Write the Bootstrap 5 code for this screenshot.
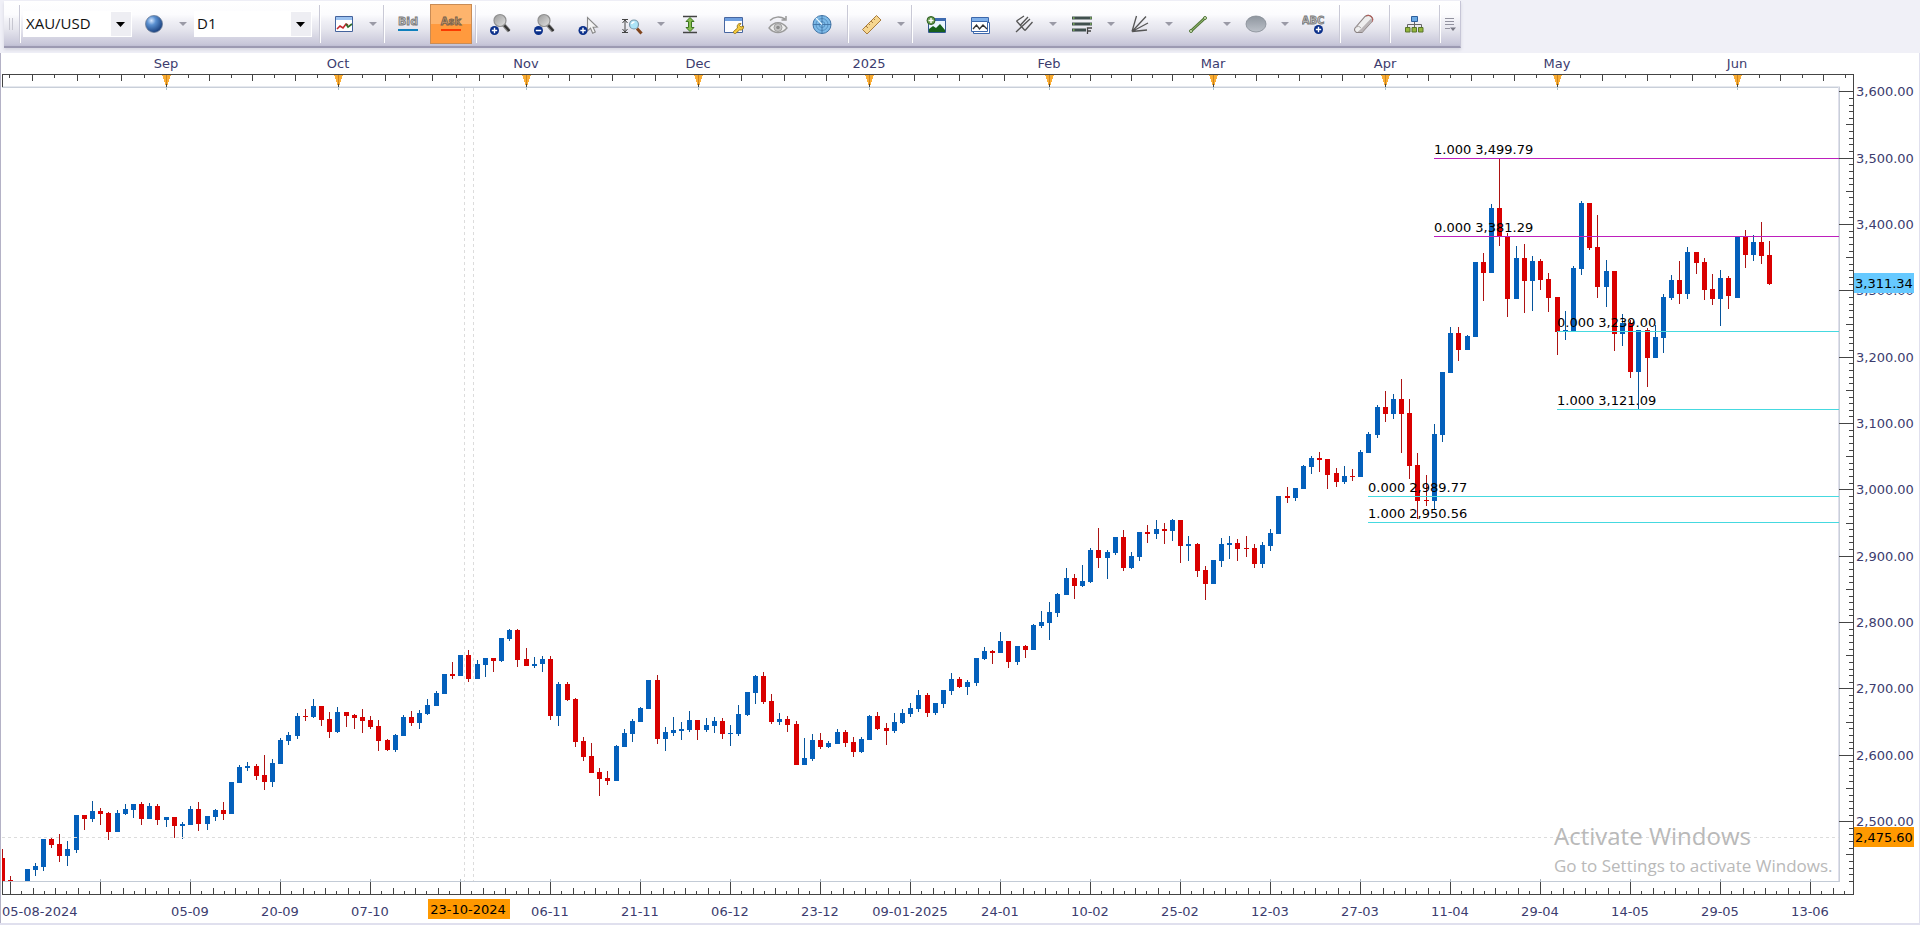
<!DOCTYPE html>
<html lang="en">
<head>
<meta charset="utf-8">
<meta name="viewport" content="width=device-width, initial-scale=1">
<title>XAU/USD D1</title>
<link href="https://cdn.jsdelivr.net/npm/bootstrap@5.3.0/dist/css/bootstrap.min.css" rel="stylesheet">
<style>
  body { background: #f0f0f7; font-family: "Open Sans", "Noto Sans", sans-serif; }
  .tools {
    height: 47px; margin: 1px 0 5px 4px; padding-right: 2px;
    background: linear-gradient(#fff 0, #fcfcfe 30%, #efeff5 46%, #e6e6ee 62%, #c9c8da 95%, #bfbed2 100%);
    border-bottom: 2px solid #9c9ab2; border-right: 1px solid #c6c5d6;
    box-shadow: 0 2px 3px #d5d5e0;
  }
  .grip { width: 15px; height: 12px; background: repeating-linear-gradient(90deg, #c6c6d0 0 1px, transparent 1px 3px) 5px 0 / 6px 12px no-repeat; }
  .rule { width: 6px; height: 38px; background: linear-gradient(90deg, transparent 3px, #c9c9d6 3px 4px, #fff 4px 5px, transparent 5px); }
  .rule-start { width: 4px; background: linear-gradient(90deg, #c9c9d6 1px, #fff 1px 2px, transparent 2px); }
  .tool { width: 44px; height: 40px; }
  .tool svg { width: 24px; height: 24px; display: block; }
  .drop { width: 14px; height: 40px; }
  .drop::after { content: ""; border: 4px solid transparent; border-top-color: #9a9aa6; border-bottom: 0; }
  .tool-on { width: 42px; background: linear-gradient(#fdb46d 0 50%, #ff9a3e 50% 100%); border: 1px solid #c98c55; }
  .pick {
    width: 109px; height: 26px; padding: 0 0 2px 2px; font-size: 15px; line-height: 22px; color: #111;
    background: url("data:image/svg+xml,%3Csvg xmlns='http://www.w3.org/2000/svg' width='20' height='26'%3E%3Crect width='20' height='26' fill='%23eeeef3'/%3E%3Cpath d='M5 11h9l-4.500 5z'/%3E%3C/svg%3E") right 0 center / 20px 26px no-repeat #fff;
    border: 1px solid #fff; appearance: none;
  }
  .pick-wide { width: 118px; }
  .chart { min-height: 400px; background: #fff; border-bottom: 2px solid #e0e0ee; box-shadow: inset 1px 0 #b4b2c6, inset -1px 0 #e0e0ee; }
  .chart > svg { position: absolute; width: 100%; height: 100%; font-family: "DejaVu Sans", Verdana, sans-serif; font-size: 13px; }
  .crisp { shape-rendering: crispEdges; }
  .axis-text { fill: #3c3c6e; }
  .watermark { width: 284px; right: 82px; bottom: 43px; color: #b9b9b9; pointer-events: none; }
  .watermark-big { font-size: 24px; line-height: 32px; }
  .watermark-small { font-size: 17px; line-height: 28px; }
</style>
</head>
<body class="d-flex flex-column vh-100 overflow-hidden">

<svg class="position-absolute" width="0" height="0" aria-hidden="true">
  <defs>
    <radialGradient id="ball" cx=".35" cy=".3" r=".75"><stop offset="0" stop-color="#d4e6ff"/><stop offset=".35" stop-color="#5a90d0"/><stop offset="1" stop-color="#153a78"/></radialGradient>
    <linearGradient id="lens" x2="1" y2="1"><stop offset="0" stop-color="#9a9a9a"/><stop offset="1" stop-color="#e2e2e2"/></linearGradient>
    <linearGradient id="oval" x2="0" y2="1"><stop offset="0" stop-color="#8f969f"/><stop offset="1" stop-color="#bcc1c9"/></linearGradient>
  </defs>
</svg>

<header class="d-flex flex-shrink-0">
  <div class="tools d-flex align-items-center" role="toolbar" aria-label="Chart tools">
    <span class="grip"></span>
    <span class="rule rule-start"></span>
    <div class="d-flex align-items-center">
      <select class="pick rounded-0" aria-label="Symbol"><option>XAU/USD</option></select>
      <button class="tool btn border-0 p-0 d-flex align-items-center justify-content-center" aria-label="Link colour"><svg viewBox="0 0 24 24"><circle cx="12" cy="12" r="8.500" fill="url(#ball)" stroke="#6d7f99" stroke-width=".8"/></svg></button>
      <button class="drop btn border-0 p-0 d-flex align-items-center justify-content-center me-1" aria-label="Link colours"></button>
      <select class="pick pick-wide rounded-0" aria-label="Period"><option>D1</option></select>
      <span class="rule ms-1"></span>
      <button class="tool btn border-0 p-0 d-flex align-items-center justify-content-center" aria-label="Chart type"><svg viewBox="0 0 24 24"><path d="M3.500 4.500h17v15h-17z" fill="#fff" stroke="#44639c"/><path d="M4 5h16v3H4z" fill="#9cc2f0"/><path d="M5 17l3-3 3 2 3-4 2 1" fill="none" stroke="#c1272d" stroke-width="1.600"/><path d="M14 12l2 3 4-3" fill="none" stroke="#2e6b2a" stroke-width="1.600"/></svg></button>
      <button class="drop btn border-0 p-0 d-flex align-items-center justify-content-center" aria-label="Chart types"></button>
      <span class="rule"></span>
      <button class="tool btn border-0 p-0 d-flex align-items-center justify-content-center" aria-label="Bid prices"><svg viewBox="0 0 24 24"><text x="12" y="13" text-anchor="middle" font-family="DejaVu Sans" font-weight="bold" font-size="11" fill="#c4c4c4" stroke="#777" stroke-width=".8">Bid</text><path d="M2 17h20v2H2z" fill="#0f80bd"/></svg></button>
      <button class="tool tool-on btn rounded-0 p-0 d-flex align-items-center justify-content-center" aria-label="Ask prices" aria-pressed="true"><svg viewBox="0 0 24 24"><text x="12" y="13" text-anchor="middle" font-family="DejaVu Sans" font-weight="bold" font-size="10" fill="#cf9a69" stroke="#75604a" stroke-width=".8">Ask</text><path d="M2 17h20v2H2z" fill="#fb3a00"/></svg></button>
      <span class="rule"></span>
      <button class="tool btn border-0 p-0 d-flex align-items-center justify-content-center" aria-label="Zoom in"><svg viewBox="0 0 24 24"><path d="M15 12l6 7" stroke="#888" stroke-width="4"/><path d="M15.500 12.500l6 6.500" stroke="#333" stroke-width="2"/><circle cx="12" cy="8.500" r="6" fill="url(#lens)" stroke="#909090" stroke-width="1.200"/><circle cx="6.500" cy="18.500" r="4.500" fill="#0a2f8a"/><path d="M3.800 18.500h5.400M6.500 15.800v5.400" stroke="#fff" stroke-width="1.400"/></svg></button>
      <button class="tool btn border-0 p-0 d-flex align-items-center justify-content-center" aria-label="Zoom out"><svg viewBox="0 0 24 24"><path d="M15 12l6 7" stroke="#888" stroke-width="4"/><path d="M15.500 12.500l6 6.500" stroke="#333" stroke-width="2"/><circle cx="12" cy="8.500" r="6" fill="url(#lens)" stroke="#909090" stroke-width="1.200"/><circle cx="6.500" cy="18.500" r="4.500" fill="#0a2f8a"/><path d="M3.800 18.500h5.400" stroke="#fff" stroke-width="1.500"/></svg></button>
      <button class="tool btn border-0 p-0 d-flex align-items-center justify-content-center" aria-label="Add point"><svg viewBox="0 0 24 24"><path d="M11.500 5.500v13.500l3-2.800 2.200 5 2.600-1.200-2.200-4.800 4.200-.2z" fill="#f4f4f4" stroke="#888" stroke-width="1.100"/><circle cx="7" cy="18.500" r="4.500" fill="#0a2f8a"/><path d="M4.300 18.500h5.400M7 15.800v5.400" stroke="#fff" stroke-width="1.400"/></svg></button>
      <button class="tool btn border-0 p-0 d-flex align-items-center justify-content-center" aria-label="Scale zoom"><svg viewBox="0 0 24 24"><path d="M5 7v13M2 7.500h6M2 20.500h6M2.500 11L5 8l2.500 3M2.500 17L5 20l2.500-3" fill="none" stroke="#444"/><path d="M17 16.500l4.500 5" stroke="#80441c" stroke-width="3"/><circle cx="14" cy="12.500" r="4.500" fill="#ade4f7" stroke="#7a97a8" stroke-width="1.200"/><path d="M11.500 12q1-2 3-2" fill="none" stroke="#fff" stroke-width="1.400"/></svg></button>
      <button class="drop btn border-0 p-0 d-flex align-items-center justify-content-center" aria-label="Scale zoom options"></button>
      <button class="tool btn border-0 p-0 d-flex align-items-center justify-content-center" aria-label="Fit vertically"><svg viewBox="0 0 24 24"><path d="M5 4.500h14M5 20.500h14" stroke="#444" stroke-width="1.400"/><path d="M12 5.500l4 4h-2.500v6H16l-4 4-4-4h2.500v-6H8z" fill="#87bd4e" stroke="#3d7520"/></svg></button>
      <button class="tool btn border-0 p-0 d-flex align-items-center justify-content-center" aria-label="Chart settings"><svg viewBox="0 0 24 24"><path d="M2.500 5.500h18v15h-18z" fill="#fdfdff" stroke="#4766a0"/><path d="M3 6h17v3H3z" fill="#6f9fe0"/><path d="M11.500 19.500l4-3.500c-1-3 1-5 3.500-4.500l-1.500 2 1.500 1.500 2.500-1c.5 3-1.500 4.500-4 4l-4 3.500c-1.500.5-2.500-1-2-2z" fill="#f4c93c" stroke="#94741c" stroke-width=".9"/></svg></button>
      <button class="tool btn border-0 p-0 d-flex align-items-center justify-content-center" aria-label="Show objects"><svg viewBox="0 0 24 24"><path d="M4 8.500c4-4 10-4.500 15-1.500M20 4v4h-4.500" fill="none" stroke="#999" stroke-width="1.500"/><path d="M3 16c5-7 13-7 18 0-5 6-13 6-18 0z" fill="#eee" stroke="#9a9a9a" stroke-width="1.300"/><circle cx="12" cy="15.500" r="4" fill="#c4c4c4" stroke="#a0a0a0"/><circle cx="12" cy="15.500" r="1.800" fill="#8c8c8c"/></svg></button>
      <button class="tool btn border-0 p-0 d-flex align-items-center justify-content-center" aria-label="Scanner"><svg viewBox="0 0 24 24"><circle cx="12" cy="12.500" r="9" fill="#7dbae8" stroke="#3f73a5"/><circle cx="12" cy="12.500" r="6" fill="none" stroke="#4c86b8" stroke-width=".8"/><circle cx="12" cy="12.500" r="3" fill="none" stroke="#4c86b8" stroke-width=".8"/><path d="M12 3.500v18M3 12.500h18" stroke="#3f73a5" stroke-width=".9"/><path d="M12 12.500L6 6" stroke="#e5f6ff" stroke-width="1.200"/></svg></button>
      <span class="rule"></span>
      <button class="tool btn border-0 p-0 d-flex align-items-center justify-content-center" aria-label="Measure"><svg viewBox="0 0 24 24"><path d="M2.500 17.500l14-14 4.500 4.500-14 14z" fill="#f6d68f" stroke="#a87c3e"/><path d="M6 14l2 2M8.500 11.500l1.500 1.500M11 9l2 2M13.500 6.500L15 8" stroke="#a87c3e"/></svg></button>
      <button class="drop btn border-0 p-0 d-flex align-items-center justify-content-center" aria-label="Measure tools"></button>
      <span class="rule"></span>
      <button class="tool btn border-0 p-0 d-flex align-items-center justify-content-center" aria-label="Add picture"><svg viewBox="0 0 24 24"><path d="M4.500 6.500h17v14h-17z" fill="#e9f5ff" stroke="#32588f"/><path d="M4 6h18v3H4z" fill="#3e6bb0"/><path d="M5 20v-3l4-3 3 2 4-4 5 6v2z" fill="#17601b"/><circle cx="7" cy="8.500" r="4" fill="#679b4c" stroke="#2f5e25"/><path d="M4.500 8.500h5M7 6v5" stroke="#fff" stroke-width="1.400"/></svg></button>
      <button class="tool btn border-0 p-0 d-flex align-items-center justify-content-center" aria-label="Chart windows"><svg viewBox="0 0 24 24"><path d="M3.500 5.500h17v12h-17z" fill="#fff" stroke="#3c68ac"/><path d="M4 6h16v3H4z" fill="#7fb0ea"/><path d="M5.500 10.500h16v11h-16z" fill="#fff" stroke="#3c68ac"/><path d="M3.500 9.500h16v10h-16z" fill="#fff" stroke="#3c68ac"/><path d="M5 17l3.500-4 3 4 3.500-4 4 4" fill="none" stroke="#333" stroke-width="1.300"/></svg></button>
      <button class="tool btn border-0 p-0 d-flex align-items-center justify-content-center" aria-label="Pitchfork"><svg viewBox="0 0 24 24"><path d="M4 20L18 7M4.500 9l8.500 9.500M4.500 9L12 4M8.500 13l7.500-8M13 18.500L20.500 10" fill="none" stroke="#555" stroke-width="1.300"/></svg></button>
      <button class="drop btn border-0 p-0 d-flex align-items-center justify-content-center" aria-label="Pitchfork tools"></button>
      <button class="tool btn border-0 p-0 d-flex align-items-center justify-content-center" aria-label="Fibonacci levels"><svg viewBox="0 0 24 24"><path d="M2 6h20M2 12h20M2 18h14" stroke="#40504e" stroke-width="3"/><path d="M3 6h1.500M20 6h1.500M3 12h1.500M20 12h1.500M3 18h1.500" stroke="#84b85c" stroke-width="1.500"/><path d="M17.500 22v-6H22M17.500 19H21" fill="none" stroke="#444" stroke-width="1.300"/></svg></button>
      <button class="drop btn border-0 p-0 d-flex align-items-center justify-content-center" aria-label="Fibonacci tools"></button>
      <button class="tool btn border-0 p-0 d-flex align-items-center justify-content-center" aria-label="Fan"><svg viewBox="0 0 24 24"><path d="M4 19.500L8.500 4M4 19.500L18 4.500M4 19.500L20 11M4 19.500L19 18" stroke="#555" stroke-width="1.300"/></svg></button>
      <button class="drop btn border-0 p-0 d-flex align-items-center justify-content-center" aria-label="Fan tools"></button>
      <button class="tool btn border-0 p-0 d-flex align-items-center justify-content-center" aria-label="Trend line"><svg viewBox="0 0 24 24"><path d="M5 19L19 6" stroke="#4f7435" stroke-width="3"/><path d="M5 19L19 6" stroke="#9bc075"/><circle cx="5" cy="19" r="1.500" fill="#dff0c8" stroke="#4f7435"/><circle cx="19" cy="6" r="1.500" fill="#dff0c8" stroke="#4f7435"/></svg></button>
      <button class="drop btn border-0 p-0 d-flex align-items-center justify-content-center" aria-label="Line tools"></button>
      <button class="tool btn border-0 p-0 d-flex align-items-center justify-content-center" aria-label="Ellipse"><svg viewBox="0 0 24 24"><ellipse cx="12" cy="12" rx="10" ry="8" fill="url(#oval)" stroke="#858b94" stroke-width=".8"/></svg></button>
      <button class="drop btn border-0 p-0 d-flex align-items-center justify-content-center" aria-label="Shape tools"></button>
      <button class="tool btn border-0 p-0 d-flex align-items-center justify-content-center" aria-label="Add text"><svg viewBox="0 0 24 24"><text x="11" y="12" text-anchor="middle" font-family="DejaVu Sans" font-size="10" font-weight="bold" fill="#c4c4c4" stroke="#777" stroke-width=".8">ABC</text><circle cx="16.500" cy="17.500" r="4.500" fill="#0a2f8a"/><path d="M13.800 17.500h5.400M16.500 14.800v5.400" stroke="#fff" stroke-width="1.400"/></svg></button>
      <span class="rule"></span>
      <button class="tool btn border-0 p-0 d-flex align-items-center justify-content-center" aria-label="Eraser"><svg viewBox="0 0 24 24"><path d="M3 16L13 4.500q3-2.500 6 0 3 2.500.5 5.500L10 20.500H4.500Q1.500 18.500 3 16z" fill="#eee" stroke="#8b8383" stroke-width="1.100"/><path d="M14 4q3-1.500 5.500.8 2.500 2.500 0 5.200" fill="none" stroke="#b0605c" stroke-width="1.200"/><path d="M9 17L19.500 6l.8 3L10 20H5.500z" fill="#b9b4b6"/><path d="M9 16q-2-3-5-1" fill="none" stroke="#a9a4a4"/></svg></button>
      <span class="rule"></span>
      <button class="tool btn border-0 p-0 d-flex align-items-center justify-content-center" aria-label="Object tree"><svg viewBox="0 0 24 24"><path d="M12.500 9v6M5.500 15v-2.500h14V15" fill="none" stroke="#666"/><path d="M9.500 4.500h6v5h-6z" fill="#6aa9e4" stroke="#2c5f9c"/><path d="M3.500 15.500H8V20H3.500zM10 15.500h4.500V20H10zM16.500 15.500H21V20h-4.500z" fill="#94b53c" stroke="#58752a"/></svg></button>
      <span class="rule"></span>
      <button class="btn border-0 p-0 d-flex" aria-label="More tools"><svg width="16" height="16" viewBox="0 0 16 16"><path d="M3 2.500h9M3 5.500h9M3 8.500h9M3 12.500h5" stroke="#92929f"/><path d="M8 11.500h6l-3 3.500z" fill="#777783"/></svg></button>
    </div>
  </div>
</header>

<main class="chart position-relative flex-grow-1">
  <svg id="chart" role="img" aria-label="XAU/USD daily candles"></svg>
  <div class="watermark position-absolute text-nowrap">
    <div class="watermark-big">Activate Windows</div>
    <div class="watermark-small">Go to Settings to activate Windows.</div>
  </div>
</main>

<script src="https://cdn.jsdelivr.net/npm/bootstrap@5.3.0/dist/js/bootstrap.bundle.min.js"></script>
<script>
// One candle per entry: colour, body top, body bottom, high, low. A dash is a candle below the visible range.
const candles = `r858 881 849 881;r880 881 876 881;-;b869 881 869 881;b866 870 863 876;b839 867 839 871;r839 845 838 848;r844 856 834 862;b849 856 841 866;b815 850 815 853;r815 819 815 830;b811 819 801 822
r811 814 808 825;r813 832 812 840;b813 832 810 832;b809 814 804 815;b804 810 804 818;r804 819 802 825;b806 819 803 819;r806 820 804 825;b817 820 817 827;r817 826 817 838;b824 826 822 839
b809 825 806 825;r809 824 802 831;b816 824 816 830;b810 817 809 821;r810 814 802 820;b782 814 782 814;b767 783 765 783;b766 768 762 771;r766 776 764 780;r775 782 755 790;b763 782 759 787
b740 764 738 764;b735 741 732 745;b716 736 713 739;r716 717 709 721;b706 717 699 718;r706 720 706 726;r719 732 712 738;b712 732 707 733;r712 716 712 727;r715 718 714 729;r717 721 709 733
r720 727 716 729;r726 741 720 751;r740 750 739 751;b735 750 734 752;b717 736 715 736;r717 723 711 726;b713 723 710 729;b705 714 699 715;b693 706 691 706;b674 694 674 694;r674 676 662 679
b655 676 655 676;r655 679 650 682;b664 679 660 679;b658 665 658 677;r658 661 658 672;b638 661 638 662;b630 639 629 641;r630 660 629 667;r659 666 648 666;b664 666 657 668;b659 664 656 672
r659 716 656 720;b684 716 682 726;r684 700 682 701;r699 742 698 747;r741 757 737 761;r756 773 743 773;r772 779 768 796;r778 781 771 785;b746 781 745 781;b733 747 729 747;b721 734 719 742
b708 722 707 722;b680 709 680 709;r680 739 675 744;b732 739 727 751;b730 733 717 736;b729 731 722 740;b720 730 711 732;r720 730 720 740;b725 730 718 732;b721 726 717 733;r721 734 718 739
b733 734 725 746;b714 734 705 736;b692 715 692 716;b676 693 675 704;r676 702 672 704;r701 722 694 724;b719 722 713 725;r719 725 716 732;r724 765 721 765;b758 765 738 765;b740 759 734 761
r740 747 733 749;b743 747 741 748;b732 744 729 744;r732 743 730 747;r742 752 737 757;b739 752 737 753;b716 740 715 740;r716 729 712 730;r728 731 723 745;b722 731 713 733;b713 723 709 724
b708 714 703 717;b695 709 690 712;r695 713 693 717;b703 713 703 715;b690 704 690 708;b679 691 673 695;r679 687 677 688;b682 687 680 695;b658 683 658 686;b651 659 647 660;r651 653 650 664
b641 653 632 653;r641 662 641 668;b646 662 646 665;r646 650 645 658;b625 650 624 650;b622 626 611 628;b612 623 602 640;b594 613 593 617;b578 595 568 595;r578 586 574 599;b581 586 565 587
b550 582 548 583;r550 558 528 568;b552 558 550 579;b537 553 537 555;r537 568 530 571;b556 568 552 569;b532 557 532 561;r532 534 525 543;b529 534 520 539;r529 531 523 544;b520 531 519 541
r520 546 520 563;b544 546 536 561;r544 571 543 577;r570 584 566 600;b560 584 560 584;b544 561 538 567;b543 545 536 559;r543 549 539 561;r548 549 536 557;r548 564 544 568;b545 564 542 568
b533 546 529 551;b496 534 496 534;r496 498 487 503;b488 498 488 501;b466 489 465 489;b458 467 456 474;r458 460 452 472;r459 475 459 489;r473 482 468 487;b476 482 466 484;r476 477 469 481
b452 477 450 477;b434 453 432 453;b407 435 405 438;r407 414 391 422;b399 414 394 419;r399 414 379 453;r413 466 399 479;r465 501 453 519;r500 501 475 506;b434 501 424 509;b372 435 372 442
b333 373 327 373;r333 350 327 361;b336 350 335 350;b262 337 262 337;r262 273 253 301;b208 273 204 273;r208 237 159 246;r237 299 233 317;b258 299 246 299;r258 281 244 313;b261 281 256 311
r261 280 259 290;r279 298 273 312;r297 332 297 355;b330 331 311 340;b268 331 266 331;b203 269 201 275;r203 248 203 250;r247 287 215 298;b271 287 260 307;r271 334 271 351;b323 334 314 346
r323 372 320 378;b330 372 330 409;r330 358 328 387;b337 358 325 358;b297 338 294 353;b280 298 275 300;r280 294 261 304;b252 294 247 299;r252 263 252 274;r262 290 258 300;r289 299 274 305
b278 299 270 326;r278 296 276 309;b236 298 236 298;r236 255 230 268;b242 255 235 261;r242 256 222 264;r255 284 241 285`.split(/[;\n]/);

const months = [[-13, ''], [166, 'Sep'], [338, 'Oct'], [526, 'Nov'], [698, 'Dec'], [869, '2025'], [1049, 'Feb'], [1213, 'Mar'], [1385, 'Apr'], [1557, 'May'], [1737, 'Jun'], [1909, '']];
const dates = ['05-09', '20-09', '07-10', '', '06-11', '21-11', '06-12', '23-12', '09-01-2025', '24-01', '10-02', '25-02', '12-03', '27-03', '11-04', '29-04', '14-05', '29-05', '13-06'];
const levels = [
  [1434, 158, '1.000 3,499.79', '#bd1fbd'], [1434, 236, '0.000 3,381.29', '#bd1fbd'],
  [1557, 331, '0.000 3,239.00', '#45d9e0'], [1557, 409, '1.000 3,121.09', '#45d9e0'],
  [1368, 496, '0.000 2,989.77', '#45d9e0'], [1368, 522, '1.000 2,950.56', '#45d9e0']
];
const svg = document.getElementById('chart');

function draw() {
  const W = svg.clientWidth, H = svg.clientHeight;
  const right = W - 81, axisX = W - 67, top = 34, bottom = H - 42, axisY = bottom + 13;
  const X = v => Math.round(2 + (v - 2) * (right - 2) / 1837);
  const Y = v => Math.round(top + (v - 87) * (bottom - top) / 794);
  const box = (x, y, w, h, c) => `<rect x="${x}" y="${y}" width="${w}" height="${h}" fill="${c}"/>`;
  const text = (x, y, s, a = 'start', c = 'axis-text') => `<text x="${x}" y="${y}" text-anchor="${a}" class="${c}">${s}</text>`;
  const ink = '#444';
  let g = '', t = '', over = '';

  // plot frame
  g += box(2, top, right - 1, 1, '#c9cfd9') + box(2, bottom, right - 1, 1, '#c3cbd6') + box(right, top, 1, bottom - top + 1, '#c9cfd9');
  g += box(2, top - 1, right - 1, 1, '#e6e9ef') + box(right - 1, top, 1, bottom - top, '#e0e0ec');

  // month axis
  g += box(2, 21, axisX - 1, 1, ink) + box(2, 21, 1, 13, ink) + box(axisX, 21, 1, axisY - 20, ink);
  months.forEach(([x, name], n) => {
    const next = months[n + 1];
    if (next) for (let k = 1; k < 8; k++) {
      const p = X(x + (next[0] - x) * k / 8);
      if (p > 2 && p < axisX) g += box(p, 22, 1, k % 2 ? 3 : 6, ink);
    }
    if (!name) return;
    const p = X(x);
    over += `<path d="M${p - 4} 22h9l-4 11h-1z" fill="#f9ac33"/>` + box(p, 22, 1, 9, '#d0861c') + box(p, 31, 1, 3, ink) + box(p, 34, 1, 3, '#a9c4d2');
    t += text(p, 15, name, 'middle');
  });

  // date axis
  g += box(2, axisY, axisX - 1, 1, ink) + box(2, bottom, 1, 13, ink);
  for (let k = 0; k <= 163; k++) {
    const h = k % 8 ? (k % 2 ? 3 : 6) : 12, p = X(10 + k * 11.25);
    g += box(p, axisY - h, 1, h, ink);
    if (!(k % 8)) g += box(p, bottom - 2, 1, 3, '#a9b4be');
  }
  t += text(2, axisY + 22, '05-08-2024');
  dates.forEach((d, n) => { if (d) t += text(X(190 + n * 90), axisY + 22, d, 'middle'); });

  // price axis
  for (let n = 0; n <= 120; n++) {
    const p = Y(91.3 + n * 6.635);
    if (p > bottom) break;
    const len = n % 10 ? (n % 5 ? 4 : 7) : 14;
    g += box(axisX - len, p, len, 1, ink);
    if (!(n % 10)) t += text(W - 64, p + 5, (3600 - n * 10).toLocaleString('en-US') + '.00');
  }

  // candles
  candles.forEach((row, i) => {
    if (row === '-') return;
    const [a, b, h, l] = row.slice(1).split(' ').map(Number), x = X(10.2 + (i - 1) * 90 / 11);
    const blue = row[0] === 'b', left = Math.max(x - 2, 2);
    g += box(x, Y(h), 1, Y(l) - Y(h), blue ? '#06549b' : '#ad1313');
    g += box(left, Y(a), x + 3 - left, Math.max(Y(b) - Y(a), 1), blue ? '#0460bb' : '#d90000');
  });

  // retracement levels
  levels.forEach(([x, y, s, c]) => {
    over += box(X(x), Y(y), right - X(x), 1, c);
    t += text(X(x), Y(y) - 4, s, 'start', '');
  });

  // crosshair and its tags
  const dash = (x1, y1, x2, y2) => `<path d="M${x1} ${y1}L${x2} ${y2}" stroke="#dcdcdc" stroke-dasharray="3 3"/>`;
  over += dash(X(464) + .5, top + 1, X(464) + .5, bottom) + dash(X(473) + .5, top + 1, X(473) + .5, bottom) + dash(2, Y(837) + .5, right, Y(837) + .5);
  const tags = box(X(428), axisY + 5, 82, 20, '#ff9900') + box(axisX + 1, Y(273), 60, 20, '#66c9ff') + box(axisX + 1, Y(827), 60, 20, '#ff9900');
  const tagText = text(X(428) + 40, axisY + 20, '23-10-2024', 'middle', '') + text(W - 65, Y(273) + 15, '3,311.34', 'start', '') + text(W - 65, Y(827) + 15, '2,475.60', 'start', '');

  svg.innerHTML = `<g class="crisp">${g}${over}</g>${t}<g class="crisp">${tags}</g>${tagText}`;
}
draw();
addEventListener('resize', draw);
</script>
</body>
</html>
